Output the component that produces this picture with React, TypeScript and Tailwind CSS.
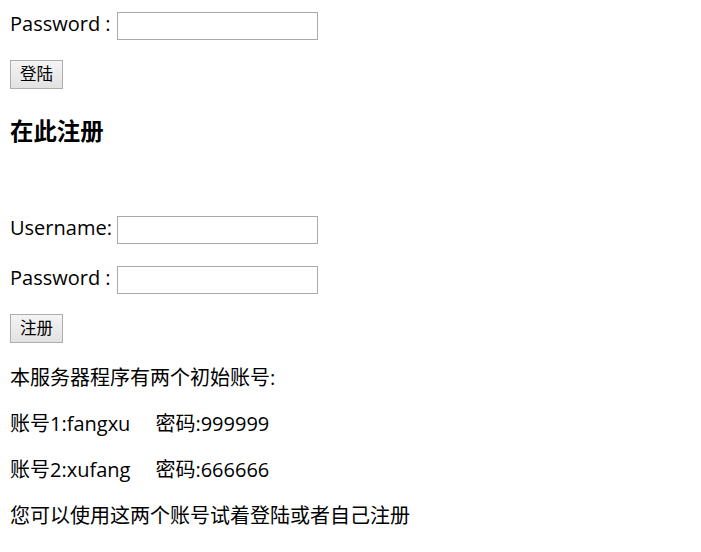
import React from "react";

const inputCls =
  "block w-[201px] h-[28px] border border-[#a9a9a9] bg-white outline-none";
const btnCls =
  "flex items-center justify-center w-[53px] h-[29px] border border-[#adadad] bg-linear-to-b from-[#f4f4f4] to-[#e2e2e2] text-[16.5px] leading-none text-black";

function Row({ label, className }: { label: string; className?: string }) {
  return (
    <div className={"flex items-center h-[28px] " + (className ?? "")}>
      <span className="w-[107px] pb-[4px] text-[20px] leading-[26px] whitespace-pre">{label}</span>
      <input className={inputCls} type="text" />
    </div>
  );
}

export default function App() {
  return (
    <div className="min-h-[552px] bg-white text-black font-['Open_Sans','Noto_Sans_CJK_SC',sans-serif] px-[10px] pt-[12px]">
      <Row label="Password :" />
      <div className="mt-[20px]">
        <button className={btnCls}>登陆</button>
      </div>
      <h3 className="mt-[27px] h-[30px] text-[23.4px] leading-[30px] font-bold">在此注册</h3>
      <Row label="Username:" className="mt-[70px]" />
      <Row label="Password :" className="mt-[22px]" />
      <div className="mt-[20px]">
        <button className={btnCls}>注册</button>
      </div>
      <div className="mt-[22px] flex flex-col gap-[20px] text-[20px] leading-[26px]">
        <p>本服务器程序有两个初始账号:</p>
        <p>
          账号1:fangxu<span className="ml-[25px]">密码:999999</span>
        </p>
        <p>
          账号2:xufang<span className="ml-[25px]">密码:666666</span>
        </p>
        <p>您可以使用这两个账号试着登陆或者自己注册</p>
      </div>
    </div>
  );
}
